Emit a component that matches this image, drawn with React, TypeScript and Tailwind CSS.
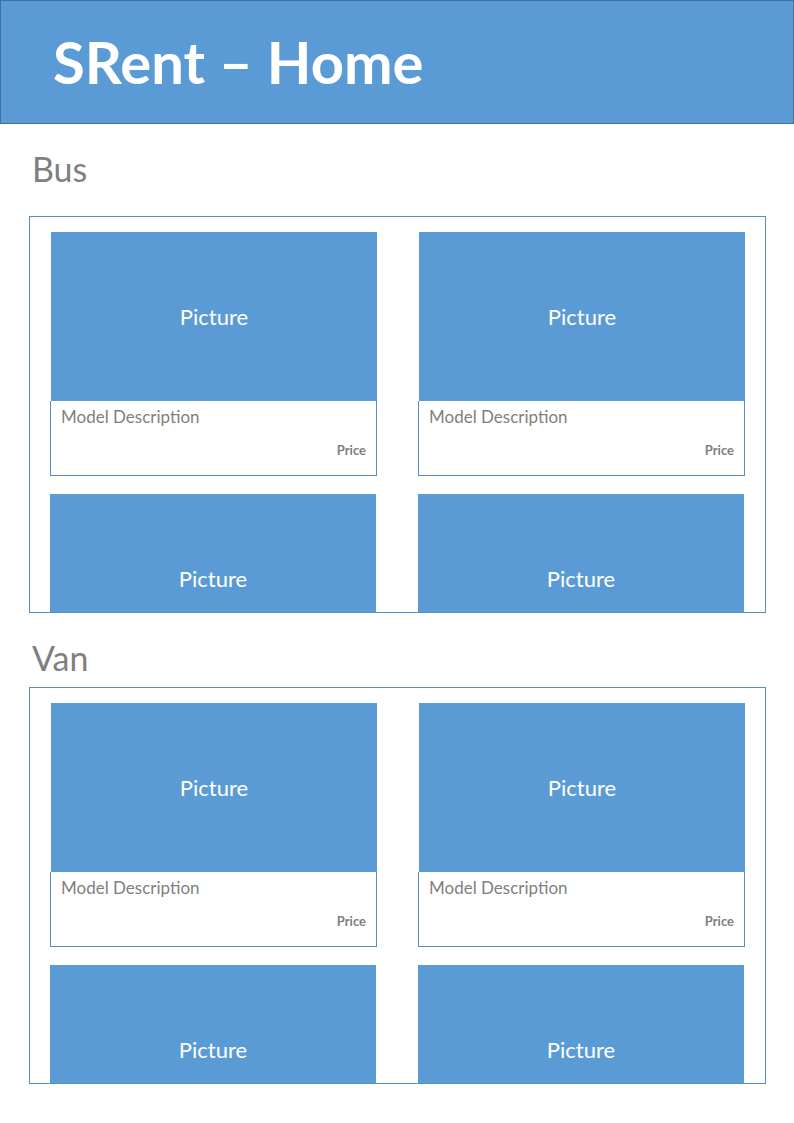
import React from 'react';

const sections = [
  { name: 'Bus', labelClass: 'mt-[24px] mb-[26px]' },
  { name: 'Van', labelClass: 'mt-[24px] mb-[8px]' },
];

// Second row only shows the picture part before the panel cuts it off
function Card({ pictureOnly = false }: { pictureOnly?: boolean }) {
  return (
    <div className="w-[327px] shrink-0">
      <div className="ml-px flex h-[169px] items-center justify-center bg-[#5b9bd5] text-[22px] text-white">
        Picture
      </div>
      {!pictureOnly && (
        <div className="flex h-[75px] flex-col border border-t-0 border-[#5a8fc2] bg-white px-[10px] pt-[6px]">
          <span className="text-[17px] leading-[20px] text-[#7f7f7f]">Model Description</span>
          <span className="mt-[15px] self-end text-[13px] font-bold leading-[16px] text-[#7f7f7f]">Price</span>
        </div>
      )}
    </div>
  );
}

function Section({ name, labelClass }: { name: string; labelClass: string }) {
  return (
    <section>
      {/* Category label */}
      <h2 className={`ml-[32px] text-[34px] leading-[42px] text-[#7f7f7f] ${labelClass}`}>{name}</h2>
      <div className="ml-[29px] h-[397px] w-[737px] overflow-hidden border border-[#5a8fc2] pl-[20px] pt-[15px]">
        <div className="flex gap-[41px]">
          <Card />
          <Card />
        </div>
        <div className="-ml-px mt-[18px] flex gap-[41px]">
          <Card pictureOnly />
          <Card pictureOnly />
        </div>
      </div>
    </section>
  );
}

export default function App() {
  return (
    <div className="min-h-[1123px] w-[794px] bg-white font-['Lato',sans-serif]">
      <header className="flex h-[124px] items-center border border-[#41719c] bg-[#5b9bd5] pl-[52px]">
        <h1 className="text-[58px] font-bold leading-[68px] text-white">SRent – Home</h1>
      </header>
      {sections.map((s) => (
        <Section key={s.name} name={s.name} labelClass={s.labelClass} />
      ))}
    </div>
  );
}
